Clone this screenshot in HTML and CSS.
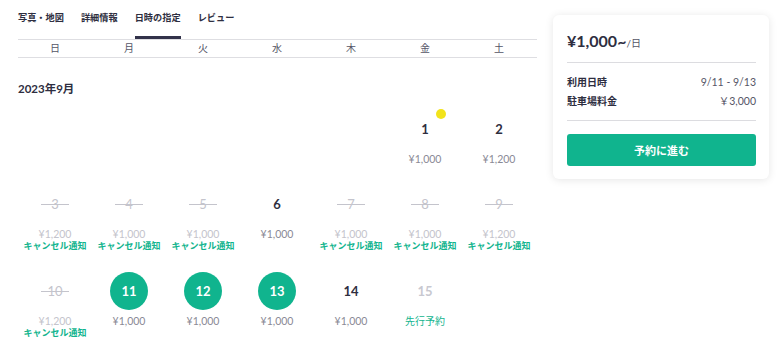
FILE: index.html
```html
<!DOCTYPE html>
<html lang="ja">
<head>
  <meta charset="UTF-8" />
  <meta name="viewport" content="width=device-width, initial-scale=1.0" />
  <title>駐車場の予約</title>
  <link rel="stylesheet" href="styles.css">
</head>
<body>
  <div class="page">
    <div class="main">
      <nav class="tabs">
        <a class="tab">写真・地図</a>
        <a class="tab">詳細情報</a>
        <a class="tab active">日時の指定</a>
        <a class="tab">レビュー</a>
      </nav>

      <div class="weekdays">
        <span>日</span><span>月</span><span>火</span><span>水</span><span>木</span><span>金</span><span>土</span>
      </div>

      <h2 class="month">2023年9月</h2>

      <div class="calendar">
        <div class="day empty"></div>
        <div class="day empty"></div>
        <div class="day empty"></div>
        <div class="day empty"></div>
        <div class="day empty"></div>
        <div class="day">
          <div class="num">1<span class="dot"></span></div>
          <div class="price">¥1,000</div>
        </div>
        <div class="day">
          <div class="num">2</div>
          <div class="price">¥1,200</div>
        </div>

        <div class="day closed">
          <div class="num">3</div>
          <div class="price">¥1,200</div>
          <div class="notice">キャンセル通知</div>
        </div>
        <div class="day closed">
          <div class="num">4</div>
          <div class="price">¥1,000</div>
          <div class="notice">キャンセル通知</div>
        </div>
        <div class="day closed">
          <div class="num">5</div>
          <div class="price">¥1,000</div>
          <div class="notice">キャンセル通知</div>
        </div>
        <div class="day">
          <div class="num">6</div>
          <div class="price">¥1,000</div>
        </div>
        <div class="day closed">
          <div class="num">7</div>
          <div class="price">¥1,000</div>
          <div class="notice">キャンセル通知</div>
        </div>
        <div class="day closed">
          <div class="num">8</div>
          <div class="price">¥1,000</div>
          <div class="notice">キャンセル通知</div>
        </div>
        <div class="day closed">
          <div class="num">9</div>
          <div class="price">¥1,200</div>
          <div class="notice">キャンセル通知</div>
        </div>

        <div class="day closed">
          <div class="num">10</div>
          <div class="price">¥1,200</div>
          <div class="notice">キャンセル通知</div>
        </div>
        <div class="day selected">
          <div class="num">11</div>
          <div class="price">¥1,000</div>
        </div>
        <div class="day selected">
          <div class="num">12</div>
          <div class="price">¥1,000</div>
        </div>
        <div class="day selected">
          <div class="num">13</div>
          <div class="price">¥1,000</div>
        </div>
        <div class="day">
          <div class="num">14</div>
          <div class="price">¥1,000</div>
        </div>
        <div class="day future">
          <div class="num">15</div>
          <div class="notice">先行予約</div>
        </div>
      </div>
    </div>

    <aside class="summary">
      <div class="summary-price">¥1,000~<small>/日</small></div>
      <div class="summary-rows">
        <div class="row"><span class="row-label">利用日時</span><span>9/11 - 9/13</span></div>
        <div class="row"><span class="row-label">駐車場料金</span><span>￥3,000</span></div>
      </div>
      <button class="reserve">予約に進む</button>
    </aside>
  </div>
</body>
</html>
```

FILE: styles.css
```css
* {
  box-sizing: border-box;
}

body {
  margin: 0;
  font-family: Lato, "Noto Sans CJK JP", sans-serif;
  background-color: #fff;
  color: #2e2e40;
}

.page {
  display: flex;
  align-items: flex-start;
  gap: 16px;
  padding-left: 18px;
}

.main {
  width: 519px;
}

/* tabs */
.tabs {
  display: flex;
  gap: 17px;
}

.tab {
  font-size: 9.2px;
  font-weight: 700;
  line-height: 14px;
  padding: 11px 0 11px;
  border-bottom: 3px solid transparent;
  color: #2e2e40;
  cursor: pointer;
}

.tab.active {
  border-bottom-color: #32324a;
}

.weekdays {
  display: grid;
  grid-template-columns: repeat(7, 74px);
  height: 19px;
  border-top: 1px solid #dedee2;
  border-bottom: 1px solid #dedee2;
  font-size: 10px;
  line-height: 17px;
  color: #555566;
  text-align: center;
}

.month {
  margin: 23px 0 13px;
  font-size: 11.5px;
  font-weight: 700;
  line-height: 16px;
}

/* calendar */
.calendar {
  display: grid;
  grid-template-columns: repeat(7, 74px);
}

.day {
  display: flex;
  flex-direction: column;
  align-items: center;
  padding-bottom: 20px;
}

.num {
  position: relative;
  width: 38px;
  height: 38px;
  border-radius: 50%;
  display: flex;
  align-items: center;
  justify-content: center;
  font-size: 13px;
  font-weight: 700;
}

.dot {
  position: absolute;
  top: -1px;
  right: -2px;
  width: 10px;
  height: 10px;
  border-radius: 50%;
  background: #f2e31b;
}

.price {
  margin-top: 5px;
  font-size: 10.5px;
  line-height: 12px;
  color: #8a8a96;
}

.notice {
  font-size: 9px;
  font-weight: 700;
  line-height: 12px;
  color: #12b48e;
}

.closed .num,
.closed .price {
  color: #c4c4cc;
  font-weight: 400;
}

.closed .num::before {
  content: "";
  position: absolute;
  left: 5px;
  right: 5px;
  top: 19px;
  height: 1px;
  background: #c4c4cc;
}

.selected .num {
  background: #10b48e;
  color: #fff;
}

.future .num {
  color: #c8c8d0;
}

.future .notice {
  margin-top: 5px;
  font-size: 10px;
  font-weight: 400;
}

/* summary card */
.summary {
  width: 216px;
  margin-top: 15px;
  padding: 16px 13px 13px 14px;
  background: #fff;
  border-radius: 6px;
  box-shadow: 0 1px 8px rgba(0, 0, 0, 0.1);
}

.summary-price {
  font-size: 16px;
  font-weight: 700;
  line-height: 20px;
  padding-bottom: 9px;
  border-bottom: 1px solid #dcdce0;
}

.summary-price small {
  font-size: 10px;
  font-weight: 400;
  color: #555566;
}

.summary-rows {
  padding: 10px 0 9px;
  border-bottom: 1px solid #dcdce0;
}

.row {
  display: flex;
  justify-content: space-between;
  font-size: 10px;
  line-height: 19px;
  color: #555566;
}

.row span:last-child {
  font-size: 10.5px;
}

.row-label {
  font-weight: 700;
  color: #2e2e40;
}

.reserve {
  display: block;
  width: 100%;
  margin-top: 13px;
  height: 32px;
  border: none;
  border-radius: 3px;
  background: #10b48e;
  color: #fff;
  font-family: inherit;
  font-size: 11px;
  font-weight: 700;
  cursor: pointer;
}
```
